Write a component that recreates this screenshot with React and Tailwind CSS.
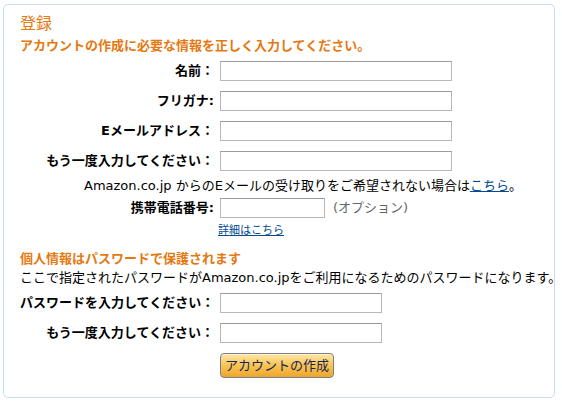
const font = { fontFamily: '"DejaVu Sans", "Noto Sans CJK JP", sans-serif' }

function Field({ label, width = 'w-[232px]', children }) {
  return (
    <div className="flex h-[20px] items-center">
      <div className="w-[194px] shrink-0 whitespace-nowrap text-right font-bold">{label}</div>
      <input
        type="text"
        className={`ml-[6px] h-[20px] ${width} border border-[#b8b8b8] border-t-[#9a9a9a] bg-white outline-none`}
      />
      {children}
    </div>
  )
}

export default function App() {
  return (
    <div className="bg-white pl-[3px] pt-[4px] text-[13px] leading-[16px] text-black" style={font}>
      <div className="h-[394px] w-[552px] rounded-[5px] border border-[#c6def0] pl-[16px]">
        <h2 className="mt-[9px] h-[20px] text-[16px] leading-[20px] text-[#e47911]">登録</h2>
        <p className="mt-[4px] font-bold text-[#e47911]">アカウントの作成に必要な情報を正しく入力してください。</p>

        <div className="mt-[7px] flex flex-col gap-[10px]">
          <Field label="名前：" />
          <Field label="フリガナ:" />
          <Field label="Eメールアドレス：" />
          <Field label="もう一度入力してください：" />
        </div>

        <p className="mt-[7px] whitespace-nowrap pl-[64px]">
          Amazon.co.jp からのEメールの受け取りをご希望されない場合は
          <a href="#" className="text-[#004b91] underline">こちら</a>。
        </p>

        <div className="mt-[4px]">
          <Field label="携帯電話番号:" width="w-[105px]">
            <span className="ml-[8px] text-[#666]">(オプション)</span>
          </Field>
        </div>

        <p className="mt-[5px] pl-[198px] text-[11px]">
          <a href="#" className="text-[#004b91] underline">詳細はこちら</a>
        </p>

        <p className="mt-[12px] font-bold text-[#e47911]">個人情報はパスワードで保護されます</p>
        <p className="mt-[3px] whitespace-nowrap">
          ここで指定されたパスワードがAmazon.co.jpをご利用になるためのパスワードになります。
        </p>

        <div className="mt-[7px] flex flex-col gap-[10px]">
          <Field label="パスワードを入力してください：" width="w-[162px]" />
          <Field label="もう一度入力してください：" width="w-[162px]" />
        </div>

        <div className="mt-[10px] pl-[200px]">
          <button
            type="button"
            className="h-[25px] w-[114px] rounded-[4px] border border-[#7d7f8c] bg-gradient-to-b from-[#fde6a4] via-[#f8c451] to-[#eda62b] text-[13px] text-[#1c2456] shadow-[inset_0_1px_0_#fff3cf]"
          >
            アカウントの作成
          </button>
        </div>
      </div>
    </div>
  )
}
